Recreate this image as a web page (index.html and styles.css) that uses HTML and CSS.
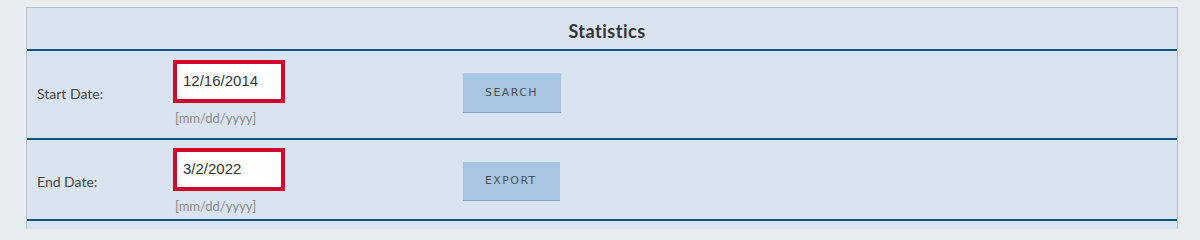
FILE: index.html
```html
<!DOCTYPE html>
<html lang="en">
<head>
<meta charset="utf-8">
<title>Statistics</title>
<link rel="stylesheet" href="styles.css">
</head>
<body>
<div class="panel">
  <div class="panel-header">
    <h2 class="panel-title">Statistics</h2>
  </div>
  <div class="form-row form-row-first">
    <label class="field-label" for="start">Start Date:</label>
    <div class="field">
      <input class="date-input" id="start" type="text" value="12/16/2014">
      <span class="field-hint">[mm/dd/yyyy]</span>
    </div>
    <div class="action">
      <button class="btn" type="button">SEARCH</button>
    </div>
  </div>
  <div class="form-row">
    <label class="field-label" for="end">End Date:</label>
    <div class="field">
      <input class="date-input" id="end" type="text" value="3/2/2022">
      <span class="field-hint">[mm/dd/yyyy]</span>
    </div>
    <div class="action">
      <button class="btn btn-short" type="button">EXPORT</button>
    </div>
  </div>
  <div class="form-row form-row-empty"></div>
</div>
</body>
</html>
```

FILE: styles.css
```css
html, body {
  margin: 0;
  padding: 0;
}

body {
  background: #e8edf2;
  font-family: "Lato", "Noto Sans", sans-serif;
  color: #3a3a3a;
  padding: 7px 0 0 26px;
  overflow: hidden;
}

.panel {
  width: 1152px;
  box-sizing: border-box;
  background: #dae4f0;
  border: 1px solid #b1c2d3;
  border-bottom: none;
}

.panel-header {
  height: 43px;
  display: flex;
  align-items: flex-end;
  justify-content: center;
  padding-bottom: 8px;
  box-sizing: border-box;
  border-bottom: 2px solid #0d5386;
}

.panel-title {
  margin: 0;
  font-size: 18px;
  line-height: 20px;
  font-weight: 700;
  letter-spacing: 0.5px;
  color: #333333;
  padding-left: 10px;
}

.form-row {
  display: grid;
  grid-template-columns: 136px 290px 1fr;
  align-items: center;
  padding: 8px 0 5px 10px;
  border-bottom: 2px solid #0d5386;
}

.form-row-first {
  padding-top: 9px;
  padding-bottom: 12px;
}

.form-row-empty {
  height: 8px;
  padding: 0;
  border-bottom: none;
}

.field-label {
  font-size: 14px;
  color: #444444;
}

.field {
  display: flex;
  flex-direction: column;
  align-items: flex-start;
}

.date-input {
  box-sizing: border-box;
  width: 112px;
  height: 43px;
  margin: 0;
  border: 4px solid #cf0a2c;
  background: #ffffff;
  padding: 0 6px 3px;
  font-family: "Liberation Sans", Arial, sans-serif;
  font-size: 15px;
  color: #333333;
  outline: none;
}

.field-hint {
  margin-top: 7px;
  padding-left: 2px;
  font-size: 13px;
  line-height: 16px;
  color: #8a8a8a;
}

.action {
  display: flex;
  align-items: center;
}

.btn {
  box-sizing: border-box;
  height: 40px;
  margin: 0;
  padding: 0 23px 0 22px;
  border: none;
  border-bottom: 1px solid #8ba8c7;
  background: #a8c6e4;
  font-family: "DejaVu Sans", Verdana, sans-serif;
  font-size: 11px;
  letter-spacing: 1.4px;
  color: #4f4f4f;
  cursor: pointer;
}

.btn-short {
  height: 39px;
}
```
